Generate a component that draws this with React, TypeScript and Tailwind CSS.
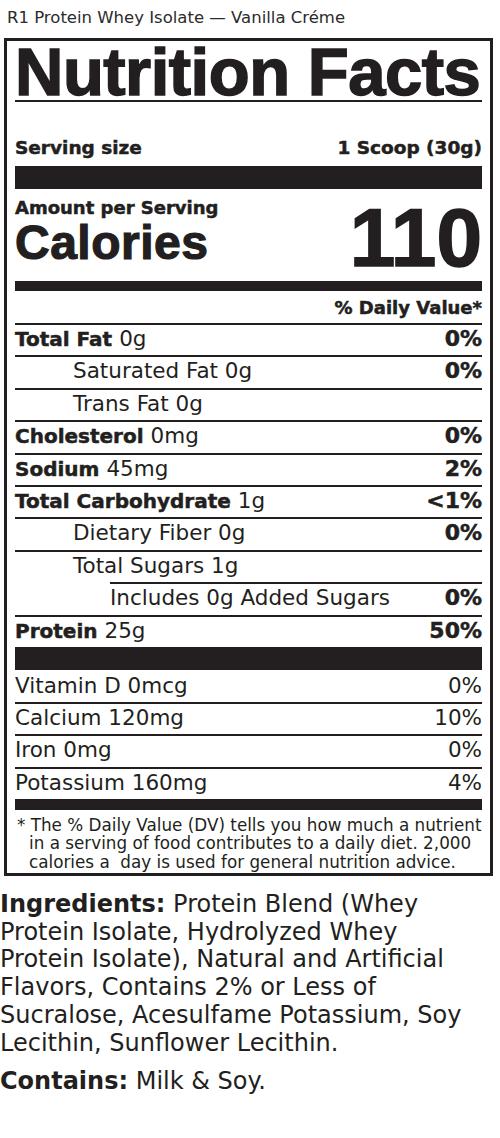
import * as React from "react";

type Nutrient = {
  bold?: string;
  text: string;
  dv?: string;
  indent?: 0 | 1 | 2;
};

const nutrients: Nutrient[] = [
  { bold: "Total Fat", text: "0g", dv: "0%" },
  { text: "Saturated Fat 0g", dv: "0%", indent: 1 },
  { text: "Trans Fat 0g", indent: 1 },
  { bold: "Cholesterol", text: "0mg", dv: "0%" },
  { bold: "Sodium", text: "45mg", dv: "2%" },
  { bold: "Total Carbohydrate", text: "1g", dv: "<1%" },
  { text: "Dietary Fiber 0g", dv: "0%", indent: 1 },
  { text: "Total Sugars 1g", indent: 1 },
  { text: "Includes 0g Added Sugars", dv: "0%", indent: 2 },
  { bold: "Protein", text: "25g", dv: "50%" },
];

const vitamins = [
  { name: "Vitamin D 0mcg", dv: "0%" },
  { name: "Calcium 120mg", dv: "10%" },
  { name: "Iron 0mg", dv: "0%" },
  { name: "Potassium 160mg", dv: "4%" },
];

const ingredients = [
  "Protein Blend (Whey",
  "Protein Isolate, Hydrolyzed Whey",
  "Protein Isolate), Natural and Artificial",
  "Flavors, Contains 2% or Less of",
  "Sucralose, Acesulfame Potassium, Soy",
  "Lecithin, Sunflower Lecithin.",
];

const heavy = "font-bold [-webkit-text-stroke:0.5px_#231f20]";

function NutrientRow({ item }: { item: Nutrient }) {
  const label = (
    <span className="whitespace-nowrap">
      {item.bold && <span className={`text-[20px] ${heavy}`}>{item.bold} </span>}
      <span className="text-[21.5px]">{item.text}</span>
    </span>
  );
  const dv = <span className={`text-[22px] ${heavy}`}>{item.dv}</span>;

  // added sugars: the rule above it is inset too
  if (item.indent === 2) {
    return (
      <div className="h-[32.4px] pl-[95px]">
        <div className="flex h-full justify-between border-t-2 border-[#231f20] leading-[27px]">
          {label}
          {dv}
        </div>
      </div>
    );
  }

  return (
    <div className="flex h-[32.4px] justify-between border-t-2 border-[#231f20] leading-[27px]">
      <div className={item.indent === 1 ? "pl-[58px]" : ""}>{label}</div>
      {dv}
    </div>
  );
}

export default function App() {
  return (
    <div className="min-h-[1138px] w-[500px] bg-white font-['DejaVu_Sans',sans-serif] text-[#231f20]">
      <div className="px-[7px] pt-[8px] text-[16.5px] leading-[20px] text-[#2b2b2b]">
        R1 Protein Whey Isolate — Vanilla Créme
      </div>

      <section className="mx-[4px] mt-[10px] w-[489px] border-[3px] border-[#231f20] px-[8px]">
        <h1 className="pt-[4px] font-['Liberation_Sans',Arial,sans-serif] text-[67px] leading-[54px] font-bold tracking-[-0.5px] [-webkit-text-stroke:1.5px_#231f20]">
          Nutrition Facts
        </h1>
        <div className="mt-[1px] h-[2px] bg-[#231f20]" />

        <div className={`mt-[34px] flex justify-between text-[18.5px] leading-[24px] ${heavy}`}>
          <span>Serving size</span>
          <span>1 Scoop (30g)</span>
        </div>
        <div className="mt-[6px] h-[23px] bg-[#231f20]" />

        <div className="flex justify-between">
          <div className="pt-[9px]">
            <div className={`text-[18px] leading-[20px] ${heavy}`}>Amount per Serving</div>
            <div className="mt-[3px] font-['Liberation_Sans',Arial,sans-serif] text-[48px] leading-[44px] font-bold tracking-[0.5px] [-webkit-text-stroke:1.2px_#231f20]">
              Calories
            </div>
          </div>
          <div className="mt-[19px] font-['Liberation_Sans',Arial,sans-serif] text-[82px] leading-[60px] font-bold [-webkit-text-stroke:1.5px_#231f20]">
            110
          </div>
        </div>
        <div className="mt-[13px] h-[10px] bg-[#231f20]" />

        <div className={`pt-[5px] text-right text-[18px] leading-[24px] ${heavy}`}>% Daily Value*</div>

        <div className="mt-[3px]">
          {nutrients.map((n) => (
            <NutrientRow key={n.text} item={n} />
          ))}
        </div>
        <div className="h-[23px] bg-[#231f20]" />

        <div className="text-[21.5px] leading-[27px]">
          {vitamins.map((v, i) => (
            <div
              key={v.name}
              className={
                i === 0
                  ? "flex h-[32px] justify-between pt-[2px]"
                  : "flex h-[32.5px] justify-between border-t-2 border-[#231f20]"
              }
            >
              <span>{v.name}</span>
              <span>{v.dv}</span>
            </div>
          ))}
        </div>
        <div className="h-[11px] bg-[#231f20]" />

        <p className="pt-[5.5px] pb-[2px] pl-[14px] -indent-[12px] text-[16.8px] leading-[18.3px] whitespace-nowrap">
          * The % Daily Value (DV) tells you how much a nutrient
          <br />
          in a serving of food contributes to a daily diet. 2,000
          <br />
          calories a{"\u00a0"} day is used for general nutrition advice.
        </p>
      </section>

      <div className="mt-[15px] text-[24px] leading-[27.8px]">
        <p>
          <span className="font-bold">Ingredients:</span>{" "}
          {ingredients.map((line, i) => (
            <React.Fragment key={line}>
              {i > 0 && <br />}
              {line}
            </React.Fragment>
          ))}
        </p>
        <p className="mt-[10px]">
          <span className="font-bold">Contains:</span> Milk &amp; Soy.
        </p>
      </div>
    </div>
  );
}
